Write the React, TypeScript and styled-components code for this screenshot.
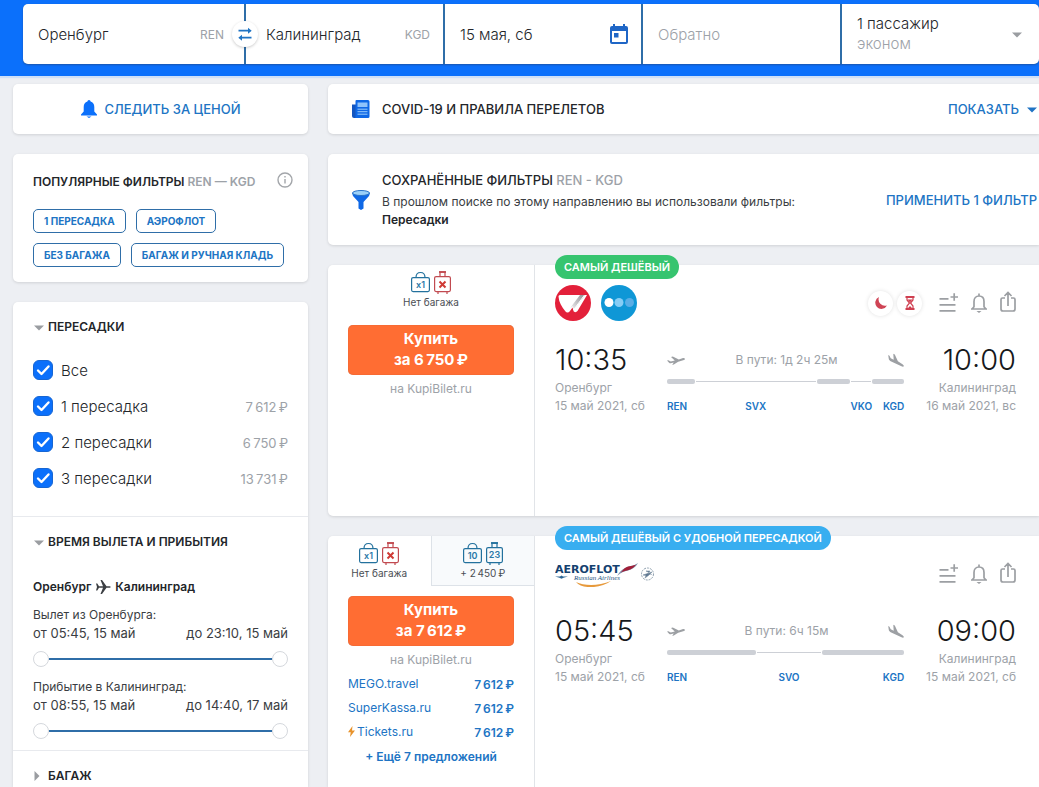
import React, { useState } from "react";
import styled, { createGlobalStyle, css } from "styled-components";

const c = {
  blue: "#0b70fb",
  link: "#2074c4",
  line: "#2f6ea8",
  ink: "#23262a",
  soft: "#3a3d42",
  muted: "#9da2a8",
  page: "#edeff3",
};

const Global = createGlobalStyle`
  *, *::before, *::after { box-sizing: border-box; }
  body {
    margin: 0;
    background: ${c.page};
    color: ${c.ink};
    font-family: Inter, "Noto Sans", sans-serif;
    font-size: 13px;
  }
  button, input { font: inherit; color: inherit; letter-spacing: inherit; }
  button { border: 0; padding: 0; background: none; cursor: pointer; }
  h2, h3, p, ul { margin: 0; padding: 0; font-weight: inherit; font-size: inherit; }
  ul { list-style: none; }
  a { color: ${c.link}; text-decoration: none; }
  svg { display: block; flex: none; }
`;

const Page = styled.div`
  min-height: 100vh;
  display: flex;
  flex-direction: column;
  overflow-x: hidden;
`;

/* ---------- search header ---------- */

const Header = styled.header`
  background: ${c.blue};
  padding: 4px 0 12px 23px;
  box-shadow: 0 2px 1px #cfe0f7;
`;

const SearchForm = styled.form`
  display: grid;
  grid-template-columns: 221fr 197fr 196fr 197fr 197fr;
  gap: 2px;
  height: 60px;
  background: ${c.line};
  border-radius: 5px;
  overflow: hidden;
  box-shadow: 0 1px 2px #1c56ad;
`;

const Field = styled.div<{ $left?: number }>`
  position: relative;
  display: flex;
  align-items: center;
  min-width: 0;
  padding: 0 13px 0 ${(p) => p.$left ?? 15}px;
  background: #fff;
  font-size: 15px;
  font-weight: 300;
`;

const FieldInput = styled.input`
  flex: 1;
  width: 0;
  min-width: 0;
  height: 100%;
  padding: 0;
  border: 0;
  outline: 0;
  background: transparent;
  &::placeholder { color: ${c.muted}; opacity: 1; }
`;

const AirportCode = styled.span<{ $wide?: boolean }>`
  color: ${c.muted};
  font-size: 12px;
  font-weight: 400;
  margin-right: ${(p) => (p.$wide ? 7 : 0)}px;
`;

const SwapButton = styled.button`
  position: absolute;
  z-index: 2;
  top: 17px;
  left: -14px;
  width: 26px;
  height: 26px;
  display: grid;
  place-items: center;
  border-radius: 50%;
  background: #fff;
  box-shadow: 0 1px 3px #0003;
`;

const DestinationField = styled(Field)`
  z-index: 1;
`;

const PassengerButton = styled.button`
  flex: 1;
  display: flex;
  align-items: center;
  justify-content: space-between;
  padding-right: 3px;
  text-align: left;
  line-height: 20px;
  small { display: block; font-size: inherit; color: ${c.muted}; }
`;

/* ---------- page grid ---------- */

const Content = styled.main`
  flex: 1;
  display: grid;
  grid-template-columns: 295px minmax(0, 1fr);
  gap: 20px;
  padding: 8px 0 0 13px;
`;

const Column = styled.div`
  display: flex;
  flex-direction: column;
  gap: 20px;
  min-width: 0;
`;

const card = css`
  background: #fff;
  box-shadow: 0 1px 3px #0000001f;
`;

const FollowButton = styled.button`
  ${card}
  height: 50px;
  border-radius: 5px;
  display: flex;
  align-items: center;
  justify-content: center;
  gap: 8px;
  color: ${c.link};
  font-weight: 500;
`;

const PopularCard = styled.section`
  ${card}
  border-radius: 5px;
  padding: 18px 15px 15px 20px;
`;

const CardHeading = styled.div`
  display: flex;
  justify-content: space-between;
  margin-bottom: 17px;
`;

const Heading = styled.h2`
  font-size: 12px;
  line-height: 20px;
  font-weight: 600;
  span { color: ${c.muted}; }
`;

const Chips = styled.div`
  display: flex;
  flex-wrap: wrap;
  gap: 10px;
`;

const Chip = styled.button`
  height: 24px;
  padding: 0 10px;
  border: 1px solid ${c.line};
  border-radius: 5px;
  color: ${c.link};
  font-size: 10px;
  font-weight: 700;
`;

const FiltersCard = styled.section`
  ${card}
  flex: 1;
  border-radius: 5px 5px 0 0;
`;

const FilterSection = styled.section`
  padding: 15px 20px 0;
  & + & { border-top: 1px solid #e8eaee; }
`;

const SectionToggle = styled.button`
  display: flex;
  align-items: center;
  gap: 3px;
  line-height: 20px;
  font-size: 12px;
  font-weight: 600;
`;

const StopList = styled.ul`
  padding: 15px 0 20px;
`;

const StopLabel = styled.label`
  display: grid;
  grid-template-columns: 20px 1fr auto;
  align-items: center;
  gap: 8px;
  height: 36px;
  font-size: 15px;
  font-weight: 300;
`;

const Tick = styled.span`
  display: grid;
  width: 20px;
  height: 20px;
  > * { grid-area: 1 / 1; }
  input {
    appearance: none;
    width: 20px;
    height: 20px;
    margin: 0;
    border: 1px solid #b9c1cb;
    border-radius: 6px;
  }
  input:checked { background: ${c.blue}; border-color: #1766d3; }
  svg { pointer-events: none; }
  input:not(:checked) + svg { visibility: hidden; }
`;

const StopPrice = styled.span`
  color: ${c.muted};
  font-size: 13px;
  font-weight: 400;
  padding-top: 2px;
`;

const RouteTitle = styled.h3`
  display: flex;
  align-items: center;
  gap: 4px;
  margin-top: 25px;
  font-size: 12px;
  line-height: 20px;
  font-weight: 600;
`;

const RangeBlock = styled.div`
  color: ${c.soft};
  line-height: 18px;
  padding-top: 9px;
  & + & { padding-top: 11px; padding-bottom: 11px; }
`;

const RangeEnds = styled.div`
  display: flex;
  justify-content: space-between;
`;

const RangeTitle = styled.p`
  font-size: 12px;
`;

const Slider = styled.div`
  display: grid;
  align-items: center;
  height: 16px;
  margin: 9px 0 0;
  background: linear-gradient(${c.line}, ${c.line}) center / calc(100% - 32px) 2px no-repeat;
  input {
    grid-area: 1 / 1;
    appearance: none;
    width: 100%;
    height: 16px;
    margin: 0;
    background: transparent;
    pointer-events: none;
  }
  input::-webkit-slider-thumb {
    appearance: none;
    width: 16px;
    height: 16px;
    border: 1px solid #d5d8dd;
    border-radius: 50%;
    background: #fff;
    pointer-events: auto;
  }
`;

/* ---------- notices ---------- */

const Notice = styled.section<{ $tall?: boolean }>`
  ${card}
  min-height: ${(p) => (p.$tall ? 91 : 50)}px;
  display: grid;
  grid-template-columns: 18px minmax(0, 1fr) auto;
  align-items: center;
  gap: 12px;
  padding: 0 2px 0 24px;
  border-radius: 5px 0 0 5px;
`;

const NoticeTitle = styled.h2`
  font-size: 13px;
  font-weight: 500;
  line-height: 18px;
  span { color: ${c.muted}; }
`;

const NoticeText = styled.p`
  padding-top: 4px;
  color: ${c.soft};
  font-size: 12px;
  line-height: 18px;
  strong { display: block; font-weight: 600; color: ${c.ink}; }
`;

const NoticeAction = styled.button`
  display: flex;
  align-items: center;
  gap: 8px;
  color: ${c.link};
  font-weight: 500;
`;

/* ---------- tickets ---------- */

const TicketCard = styled.article<{ $open?: boolean }>`
  ${card}
  position: relative;
  display: grid;
  grid-template-columns: 207px minmax(0, 1fr);
  min-height: 251px;
  flex: ${(p) => (p.$open ? "1 0 auto" : "none")};
  border-radius: ${(p) => (p.$open ? "5px 0 0 0" : "5px 0 0 5px")};
`;

const BuySide = styled.div`
  border-right: 1px solid #e1e4e8;
`;

const Tabs = styled.div`
  display: flex;
  height: 50px;
`;

const Tab = styled.button<{ $idle?: boolean }>`
  flex: 1;
  display: flex;
  flex-direction: column;
  align-items: center;
  padding-top: 6px;
  font-size: 10px;
  line-height: 16px;
  font-weight: 400;
  color: #4a4e54;
  ${(p) =>
    p.$idle &&
    css`
      background: #f8fafc;
      border-left: 1px solid #dde2e8;
      border-bottom: 1px solid #dde2e8;
    `}
`;

const BuyBody = styled.div`
  padding: 10px 20px 0;
`;

const BuyButton = styled.button`
  display: block;
  width: 100%;
  height: 50px;
  padding-bottom: 2px;
  border-radius: 5px;
  background: #ff6d33;
  box-shadow: inset 0 0 1px #b5573a;
  color: #fff;
  font-size: 15px;
  line-height: 21px;
  font-weight: 700;
`;

const Seller = styled.p`
  margin-top: 3px;
  line-height: 22px;
  font-size: 12px;
  text-align: center;
  color: ${c.muted};
`;

const Offer = styled.li`
  display: flex;
  align-items: center;
  justify-content: space-between;
  height: 24px;
  font-size: 12px;
  a { display: flex; align-items: center; gap: 2px; }
  strong { font-weight: 600; color: ${c.link}; padding-top: 3px; }
`;

const MoreOffers = styled.button`
  display: block;
  width: 100%;
  margin-top: 2px;
  line-height: 24px;
  font-size: 12px;
  font-weight: 600;
  color: ${c.link};
`;

const FlightSide = styled.div`
  padding: 20px 23px 0 20px;
`;

const Badge = styled.span<{ $tone: string }>`
  position: absolute;
  top: -10px;
  left: 227px;
  padding: 0 9px;
  border-radius: 12px;
  background: ${(p) => p.$tone};
  color: #fff;
  font-size: 11px;
  line-height: 24px;
  font-weight: 600;
`;

const TicketTop = styled.div`
  display: flex;
  align-items: center;
  justify-content: space-between;
  height: 36px;
`;

const Logos = styled.div`
  display: flex;
  gap: 10px;
`;

const Actions = styled.div`
  display: flex;
  align-items: center;
  gap: 12px;
`;

const Warnings = styled.div`
  display: flex;
  gap: 4px;
  margin-right: 4px;
`;

const Warning = styled.span`
  display: grid;
  place-items: center;
  width: 25px;
  height: 25px;
  border-radius: 50%;
  background: #fff;
  box-shadow: 0 0 4px #0000001f;
`;

const Flight = styled.div`
  display: grid;
  grid-template-columns: auto minmax(0, 1fr) auto;
  gap: 22px;
  padding-top: 19px;
`;

const Endpoint = styled.div<{ $right?: boolean }>`
  text-align: ${(p) => (p.$right ? "right" : "left")};
  color: ${c.muted};
  font-size: 12px;
  line-height: 18px;
  time { display: block; color: #16181b; font-size: 29px; line-height: 40px; font-weight: 300; margin-bottom: -1px; }
`;

const Route = styled.div`
  display: flex;
  flex-direction: column;
`;

const RouteInfo = styled.div`
  display: flex;
  justify-content: space-between;
  align-items: center;
  height: 39px;
  color: ${c.muted};
  font-size: 12px;
`;

const Track = styled.div`
  display: flex;
  gap: 1px;
`;

const Part = styled.div<{ $grow: number; $stop?: boolean; $end?: boolean }>`
  flex: ${(p) => p.$grow} 1 0;
  width: 0;
  display: flex;
  flex-direction: column;
  align-items: ${(p) => (p.$stop ? "center" : p.$end ? "flex-end" : "flex-start")};
  font-size: 10px;
  font-weight: 600;
  color: ${c.link};
  line-height: 18px;
  &::before {
    content: "";
    width: 100%;
    height: ${(p) => (p.$stop ? 1 : 5)}px;
    margin: ${(p) => (p.$stop ? "2px 0" : "0")};
    border-radius: ${(p) => (p.$stop ? 0 : 2)}px;
    background: #cdd0d6;
  }
  span { padding-top: 13px; }
`;

/* ---------- drawings ---------- */

const Caret = ({ dir = "down", color = "#9a9da1", size = 12 }: { dir?: "down" | "right"; color?: string; size?: number }) => (
  <svg width={size} height="12" viewBox={`${(12 - size) / 2} 0 ${size} 12`} fill={color} aria-hidden="true">
    <path d={dir === "down" ? "M1 4.500h10L6 9.500z" : "M1.500 1v10L6.500 6z"} />
  </svg>
);

const SwapIcon = () => (
  <svg width="14" height="14" viewBox="0 0 14 14" fill="none" stroke={c.link} strokeWidth="1.800" aria-hidden="true">
    <path d="M.5 3.700h11M2.500 10.700h11" />
    <path d="M10 .700l3.700 3-3.700 3zM4 7.700l-3.700 3 3.700 3z" fill={c.link} stroke="none" />
  </svg>
);

const CalendarIcon = () => (
  <svg width="18" height="20" viewBox="0 0 18 20" aria-hidden="true">
    <path fill="#1f66c6" fillRule="evenodd" d="M3 0h2v2h8V0h2v2h1a2 2 0 0 1 2 2v14a2 2 0 0 1-2 2H2a2 2 0 0 1-2-2V4a2 2 0 0 1 2-2h1zM2 7v11h14V7zM4 9h4.500v4.500H4z" />
  </svg>
);

const BellSolid = () => (
  <svg width="16" height="18" viewBox="0 0 16 18" fill={c.blue} aria-hidden="true">
    <path d="M8 0a1.600 1.600 0 0 1 1.600 1.500C12 2.200 13.300 4.200 13.300 7v4.500L16 14.600v1H0v-1l2.700-3.100V7C2.700 4.200 4 2.200 6.400 1.500A1.600 1.600 0 0 1 8 0zM5.500 16.500h5L8 18z" />
  </svg>
);

const NewsIcon = () => (
  <svg width="18" height="18" viewBox="0 0 18 18" aria-hidden="true">
    <path fill="#1456c0" d="M0 4.500h4V18H2a2 2 0 0 1-2-2z" />
    <path fill="#0f68e6" d="M3.500 1a1 1 0 0 1 1-1H16a1.500 1.500 0 0 1 1.500 1.500v15A1.500 1.500 0 0 1 16 18H2.500a1 1 0 0 0 1-1z" />
    <path fill="#8fc3fb" d="M5.500 2.500h10V7h-10z" />
    <path stroke="#9accfb" d="M5.500 9.200h10M5.500 11.700h10M5.500 14.200h10" />
  </svg>
);

const FunnelIcon = () => (
  <svg width="18" height="20" viewBox="0 0 18 20" aria-hidden="true">
    <path fill="#0f68e6" d="M0 3l1 3 5.500 6v6.500L9 20l2.500-1.500V12L17 6l1-3z" />
    <ellipse cx="9" cy="3" rx="8.500" ry="2.500" fill="#9bd0f8" stroke="#2a74c9" />
  </svg>
);

const InfoIcon = () => (
  <svg width="16" height="16" viewBox="0 0 16 16" fill="none" stroke="#a3a6aa" strokeWidth="1.400" aria-hidden="true">
    <circle cx="8" cy="8" r="7" />
    <path d="M8 7v4.500M8 4v1.600" />
  </svg>
);

const PlaneIcon = () => (
  <svg width="16" height="16" viewBox="0 0 16 16" fill="#3c3f43" aria-hidden="true">
    <path d="M1 4.500h1.300L4 7.200h4L5.500 1H7l4.500 6.200h2.700c2 0 2 1.600 0 1.600h-2.700L7 15H5.500L8 8.800H4l-1.700 2.700H1L2 8z" />
  </svg>
);

const Takeoff = () => (
  <svg width="18" height="10" viewBox="0 0 18 10" fill="#9da0a4" aria-hidden="true">
    <path d="M0 5.600l1.400-.4 2.400 1.300 4-1L4 1.900l1.800-.4 6 2.900 3.600-1.200c1.200-.4 2.300-.1 2.500.5.200.6-.5 1.200-1.700 1.600l-5 1.500L6.800 9.500l-1.600.4 1.500-2.400-3 .8c-.6.100-1 0-1.400-.4z" />
  </svg>
);

const Landing = () => (
  <svg width="16" height="14" viewBox="0 0 16 14" fill="#9da0a4" aria-hidden="true">
    <path d="M.2 2l1.300.7L2.700 5.300l3 1.500L5.300.8l1.500.8 3.100 6.700 4.600 3c1.100.8 1.600 1.500 1.300 2-.3.500-1.300.5-2.300 0L3.200 8.500C1.800 7.800 1 7 .8 6z" />
  </svg>
);

const MoonIcon = () => (
  <svg width="12" height="12" viewBox="0 0 12 12" fill="#cf4455" aria-hidden="true">
    <path d="M4 0A6.500 6.500 0 0 0 12 8.500 6.200 6.200 0 1 1 4 0z" />
  </svg>
);

const HourglassIcon = () => (
  <svg width="10" height="14" viewBox="0 0 10 14" fill="none" stroke="#cf3f50" strokeWidth="1.200" aria-hidden="true">
    <path d="M.5 1h9M.5 13h9" strokeWidth="1.800" />
    <path d="M2 1v3L4.500 7 2 10v3M8 1v3L5.500 7 8 10v3" />
    <path d="M2.500 3.500h5L5 6.500zM2.500 12.500L5 10l2.500 2.500z" fill="#cf3f50" stroke="none" />
  </svg>
);

const iconLine = { fill: "none", stroke: "#9c9fa3", strokeWidth: 1.7 };

const ListPlus = () => (
  <svg width="20" height="20" viewBox="0 0 20 20" {...iconLine} aria-hidden="true">
    <path d="M1.500 5.800h9M1.500 11.800h16M1.500 17.800h16M12.500 4h7.500M16.200.3v7.500" />
  </svg>
);

const BellLine = () => (
  <svg width="18" height="20" viewBox="0 0 18 20" {...iconLine} strokeLinejoin="round" aria-hidden="true">
    <path d="M1 16h16M2.500 15.500l1.500-1.800V8.500C4 5.200 6 3 9 3s5 2.200 5 5.500v5.200l1.500 1.800M9 3V.5" />
    <path d="M6.500 18h5L9 20z" fill="#9c9fa3" stroke="none" />
  </svg>
);

const ShareIcon = () => (
  <svg width="16" height="24" viewBox="0 0 16 24" {...iconLine} aria-hidden="true">
    <path d="M5 7H2.500A1.500 1.500 0 0 0 1 8.500V18a2 2 0 0 0 2 2h10a2 2 0 0 0 2-2V8.500A1.500 1.500 0 0 0 13.500 7H11M8 15V1.500M4.500 5L8 1.500 11.500 5" />
  </svg>
);

const Bags = ({ hand, hold }: { hand: string; hold?: string }) => {
  const holdColor = hold ? "#23719d" : "#c14a50";
  return (
    <svg width="40" height="23" viewBox="0 0 40 23" fill="none" strokeWidth="1.200" aria-hidden="true">
      <rect x=".6" y="6.600" width="17.800" height="14" rx="1.500" stroke="#23719d" />
      <path d="M5 6.500C5 3 7 1.500 9.500 1.500S14 3 14 6.500" stroke="#23719d" />
      <text x="9.500" y="17" textAnchor="middle" fontSize="9" fontWeight="600" fill="#2a78a8">{hand}</text>
      <rect x="23.600" y="5.600" width="15.800" height="15" rx="1.500" stroke={holdColor} />
      <path d="M29 5.500V1h5v4.500M27 21v2M36 21v2" stroke={holdColor} />
      <path d="M28 1h7" stroke={holdColor} strokeWidth="1.800" />
      {hold ? (
        <text x="31.500" y="15.500" textAnchor="middle" fontSize="9" fontWeight="600" fill="#2a78a8">{hold}</text>
      ) : (
        <path d="M28.500 10.500l6 6M34.500 10.500l-6 6" stroke="#cf3a35" strokeWidth="2" />
      )}
    </svg>
  );
};

const BoltIcon = () => (
  <svg width="7" height="11" viewBox="0 0 7 11" fill="#e8922a" aria-hidden="true">
    <path d="M4.500 0L0 6.200h2.700L2 11l5-6.500H4z" />
  </svg>
);

const RedWingsLogo = () => (
  <svg width="36" height="36" viewBox="0 0 36 36" role="img" aria-label="Red Wings">
    <defs>
      <linearGradient id="wing" x1="0" y1="1" x2="1" y2="0">
        <stop offset="0" stopColor="#f1f1f2" />
        <stop offset="1" stopColor="#8d8d93" />
      </linearGradient>
    </defs>
    <circle cx="18" cy="18" r="18" fill="#e3203a" />
    <path d="M3.500 11.500C3.500 10.500 4.500 10 5.500 10H32L22.500 26c-1 1.500-3.500 1.500-4 0l-1-3.500-2.700 3.800c-1.200 1.600-3.300 1.600-4.500 0C6.500 21.500 4 17.500 3.500 11.500z" fill="#fff" />
    <path d="M15.500 22.500L25 10h5l-11 14.500-1.500-3.500-1.500 2z" fill="url(#wing)" />
    <path d="M18.500 25L29.500 10" stroke="#fff" strokeWidth="1" />
  </svg>
);

const DotsLogo = () => (
  <svg width="36" height="36" viewBox="0 0 36 36" role="img" aria-label="Победа">
    <circle cx="18" cy="18" r="18" fill="#0f97d6" />
    <circle cx="8" cy="17.500" r="4.500" fill="#fff" />
    <circle cx="18" cy="17.500" r="4.500" fill="#86cdf5" />
    <circle cx="28.500" cy="17.500" r="4.500" fill="#5aaee6" />
  </svg>
);

const AeroflotLogo = () => (
  <svg width="100" height="26" viewBox="0 0 100 26" role="img" aria-label="Aeroflot">
    <text x="0" y="12" fontFamily="DejaVu Sans, sans-serif" fontWeight="700" fontSize="11" fill="#14416f">AEROFLOT</text>
    <path d="M0 15.500h5l1.500-1 1.500 1h5l-4.500 1.200-2 1-2-1z" fill="#2b6593" />
    <text x="19" y="19" fontFamily="Liberation Serif, serif" fontStyle="italic" fontSize="7" fill="#27557f">Russian Airlines</text>
    <path d="M21 21c8 4 22 4.500 35-1-10 7.500-29 8.500-35 1z" fill="#e79a3c" />
    <path d="M62 15c3-5 7-8.500 12-9.500 4-1 6-1.500 9-3.500-2.500 4.500-6 6.500-10 7.500-4 .9-7 2-11 5.500z" fill="#7f90aa" />
    <path d="M66 11.500c3-4.500 6-6 10-6.500 2-.3 4-1 5-1.500-2 3-4 4.500-8 5.700-3 .8-5 1.100-7 2.300z" fill="#a21f38" />
    <circle cx="92.500" cy="13" r="6" fill="none" stroke="#8e9fae" strokeDasharray="2 1" />
    <path d="M88 14l9-3-3 3-4 3 1-2.500zM91 10l4 0-1 1.500zM92 12.500l5 1" fill="#5b7590" stroke="#7c90a2" strokeWidth=".6" />
  </svg>
);

/* ---------- data ---------- */

const stops = [
  { label: "Все", price: "" },
  { label: "1 пересадка", price: "7\u2009612\u2009₽" },
  { label: "2 пересадки", price: "6\u2009750\u2009₽" },
  { label: "3 пересадки", price: "13\u2009731\u2009₽" },
];

type PartData = { grow: number; stop?: boolean; end?: boolean; code?: string };

type TicketData = {
  badge: string;
  tone: string;
  price: string;
  extra?: string;
  offers?: { name: string; price: string; fast?: boolean }[];
  logos: React.ReactNode;
  warnings?: boolean;
  from: [string, string, string];
  to: [string, string, string];
  duration: string;
  parts: PartData[];
};

const tickets: TicketData[] = [
  {
    badge: "САМЫЙ ДЕШЁВЫЙ",
    tone: "#36c46f",
    price: "6\u2009750\u2009₽",
    logos: (<><RedWingsLogo /><DotsLogo /></>),
    warnings: true,
    from: ["10:35", "Оренбург", "15 май 2021, сб"],
    to: ["10:00", "Калининград", "16 май 2021, вс"],
    duration: "В пути: 1д 2ч 25м",
    parts: [
      { grow: 28, code: "REN" },
      { grow: 120, stop: true, code: "SVX" },
      { grow: 34 },
      { grow: 20, stop: true, code: "VKO" },
      { grow: 32, end: true, code: "KGD" },
    ],
  },
  {
    badge: "САМЫЙ ДЕШЁВЫЙ С УДОБНОЙ ПЕРЕСАДКОЙ",
    tone: "#38aef0",
    price: "7\u2009612\u2009₽",
    extra: "+ 2\u2009450\u2009₽",
    offers: [
      { name: "MEGO.travel", price: "7\u2009612\u2009₽" },
      { name: "SuperKassa.ru", price: "7\u2009612\u2009₽" },
      { name: "Tickets.ru", price: "7\u2009612\u2009₽", fast: true },
    ],
    logos: <AeroflotLogo />,
    from: ["05:45", "Оренбург", "15 май 2021, сб"],
    to: ["09:00", "Калининград", "15 май 2021, сб"],
    duration: "В пути: 6ч 15м",
    parts: [
      { grow: 89, code: "REN" },
      { grow: 65, stop: true, code: "SVO" },
      { grow: 82, end: true, code: "KGD" },
    ],
  },
];

const TimeRange = ({ title, from, to }: { title: string; from: string; to: string }) => (
  <RangeBlock>
    <RangeTitle>{title}</RangeTitle>
    <RangeEnds>
      <span>{from}</span>
      <span>{to}</span>
    </RangeEnds>
    <Slider>
      <input type="range" aria-label={`${title} ${from}`} defaultValue={0} />
      <input type="range" aria-label={`${title} ${to}`} defaultValue={100} />
    </Slider>
  </RangeBlock>
);

const Ticket = ({ t, open }: { t: TicketData; open: boolean }) => (
  <TicketCard $open={open}>
    <BuySide>
      <Tabs>
        <Tab><Bags hand="x1" />Нет багажа</Tab>
        {t.extra && <Tab $idle><Bags hand="10" hold="23" />{t.extra}</Tab>}
      </Tabs>
      <BuyBody>
        <BuyButton>Купить<br />за {t.price}</BuyButton>
        <Seller>на KupiBilet.ru</Seller>
        {t.offers && (
          <>
            <ul>
              {t.offers.map((o) => (
                <Offer key={o.name}>
                  <a href="#">{o.fast && <BoltIcon />}{o.name}</a>
                  <strong>{o.price}</strong>
                </Offer>
              ))}
            </ul>
            <MoreOffers>+ Ещё 7 предложений</MoreOffers>
          </>
        )}
      </BuyBody>
    </BuySide>
    <FlightSide>
      <Badge $tone={t.tone}>{t.badge}</Badge>
      <TicketTop>
        <Logos>{t.logos}</Logos>
        <Actions>
          {t.warnings && (
            <Warnings>
              <Warning><MoonIcon /></Warning>
              <Warning><HourglassIcon /></Warning>
            </Warnings>
          )}
          <button aria-label="Сравнить"><ListPlus /></button>
          <button aria-label="Следить за ценой"><BellLine /></button>
          <button aria-label="Поделиться"><ShareIcon /></button>
        </Actions>
      </TicketTop>
      <Flight>
        <Endpoint><time>{t.from[0]}</time>{t.from[1]}<br />{t.from[2]}</Endpoint>
        <Route>
          <RouteInfo><Takeoff />{t.duration}<Landing /></RouteInfo>
          <Track>
            {t.parts.map((p, i) => (
              <Part key={i} $grow={p.grow} $stop={p.stop} $end={p.end}>
                {p.code && <span>{p.code}</span>}
              </Part>
            ))}
          </Track>
        </Route>
        <Endpoint $right><time>{t.to[0]}</time>{t.to[1]}<br />{t.to[2]}</Endpoint>
      </Flight>
    </FlightSide>
  </TicketCard>
);

export default function App() {
  const [checked, setChecked] = useState(stops.map(() => true));
  return (
    <Page>
      <Global />
      <Header>
        <SearchForm onSubmit={(e) => e.preventDefault()}>
          <Field>
            <FieldInput aria-label="Откуда" defaultValue="Оренбург" />
            <AirportCode $wide>REN</AirportCode>
          </Field>
          <DestinationField $left={20}>
            <SwapButton type="button" aria-label="Поменять местами"><SwapIcon /></SwapButton>
            <FieldInput aria-label="Куда" defaultValue="Калининград" />
            <AirportCode>KGD</AirportCode>
          </DestinationField>
          <Field>
            <FieldInput aria-label="Дата вылета" defaultValue="15 мая, сб" />
            <CalendarIcon />
          </Field>
          <Field><FieldInput aria-label="Дата возвращения" placeholder="Обратно" /></Field>
          <Field>
            <PassengerButton type="button">
              <span>1 пассажир<small>эконом</small></span>
              <Caret />
            </PassengerButton>
          </Field>
        </SearchForm>
      </Header>
      <Content>
        <Column as="aside">
          <FollowButton><BellSolid />СЛЕДИТЬ ЗА ЦЕНОЙ</FollowButton>
          <PopularCard>
            <CardHeading>
              <Heading>ПОПУЛЯРНЫЕ ФИЛЬТРЫ <span>REN — KGD</span></Heading>
              <InfoIcon />
            </CardHeading>
            <Chips>
              <Chip>1 ПЕРЕСАДКА</Chip>
              <Chip>АЭРОФЛОТ</Chip>
              <Chip>БЕЗ БАГАЖА</Chip>
              <Chip>БАГАЖ И РУЧНАЯ КЛАДЬ</Chip>
            </Chips>
          </PopularCard>
          <FiltersCard>
            <FilterSection>
              <SectionToggle><Caret />ПЕРЕСАДКИ</SectionToggle>
              <StopList>
                {stops.map((s, i) => (
                  <li key={s.label}>
                    <StopLabel>
                      <Tick>
                        <input
                          type="checkbox"
                          checked={checked[i]}
                          onChange={() => setChecked(checked.map((v, k) => (k === i ? !v : v)))}
                        />
                        <svg width="20" height="20" viewBox="0 0 20 20" fill="none" stroke="#fff" strokeWidth="2.400" strokeLinecap="round" strokeLinejoin="round" aria-hidden="true">
                          <path d="M5 10.500l3.500 3.500L15.500 6.500" />
                        </svg>
                      </Tick>
                      {s.label}
                      <StopPrice>{s.price}</StopPrice>
                    </StopLabel>
                  </li>
                ))}
              </StopList>
            </FilterSection>
            <FilterSection>
              <SectionToggle><Caret />ВРЕМЯ ВЫЛЕТА И ПРИБЫТИЯ</SectionToggle>
              <RouteTitle>Оренбург <PlaneIcon /> Калининград</RouteTitle>
              <TimeRange title="Вылет из Оренбурга:" from="от 05:45, 15 май" to="до 23:10, 15 май" />
              <TimeRange title="Прибытие в Калининград:" from="от 08:55, 15 май" to="до 14:40, 17 май" />
            </FilterSection>
            <FilterSection>
              <SectionToggle><Caret dir="right" />БАГАЖ</SectionToggle>
            </FilterSection>
          </FiltersCard>
        </Column>
        <Column>
          <Notice>
            <NewsIcon />
            <NoticeTitle>COVID-19 И ПРАВИЛА ПЕРЕЛЕТОВ</NoticeTitle>
            <NoticeAction>ПОКАЗАТЬ <Caret color={c.link} size={10} /></NoticeAction>
          </Notice>
          <Notice $tall>
            <FunnelIcon />
            <div>
              <NoticeTitle>СОХРАНЁННЫЕ ФИЛЬТРЫ <span>REN - KGD</span></NoticeTitle>
              <NoticeText>
                В прошлом поиске по этому направлению вы использовали фильтры:
                <strong>Пересадки</strong>
              </NoticeText>
            </div>
            <NoticeAction>ПРИМЕНИТЬ 1 ФИЛЬТР</NoticeAction>
          </Notice>
          {tickets.map((t, i) => (
            <Ticket key={t.badge} t={t} open={i === tickets.length - 1} />
          ))}
        </Column>
      </Content>
    </Page>
  );
}
